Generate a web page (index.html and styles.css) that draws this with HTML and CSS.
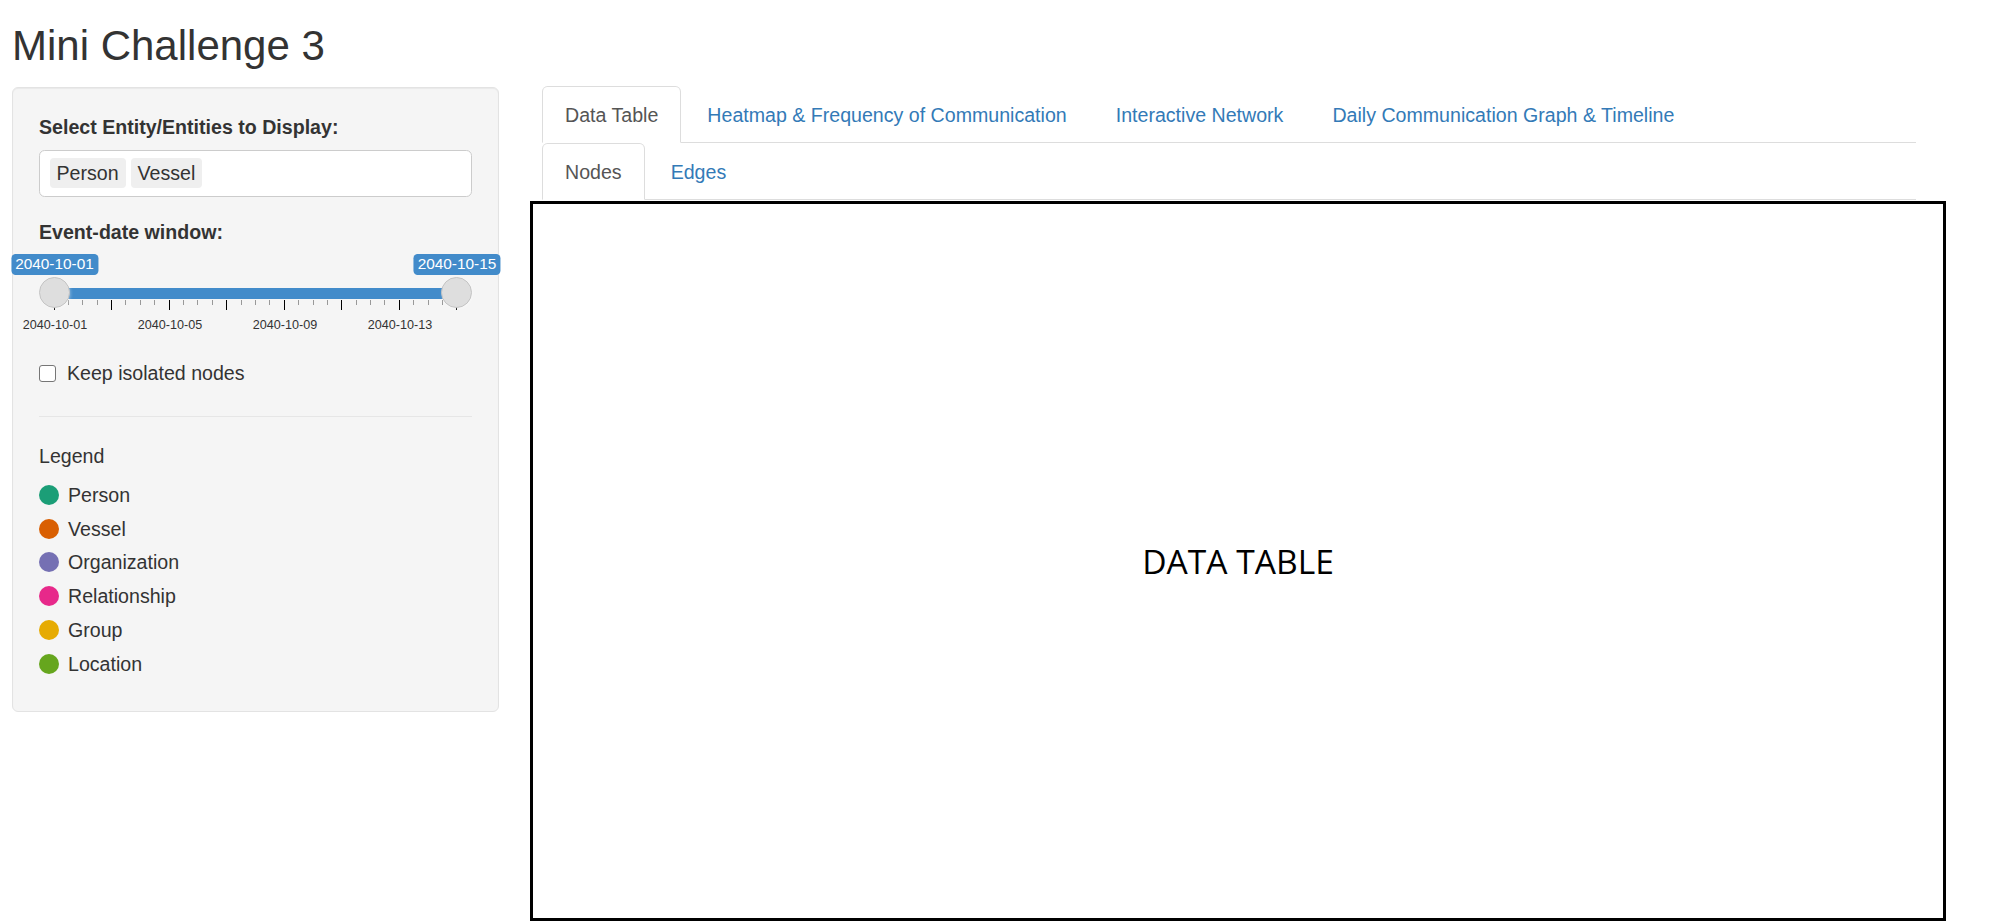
FILE: index.html
```html
<!DOCTYPE html>
<html lang="en">
<head>
<meta charset="utf-8">
<title>Mini Challenge 3</title>
<link rel="stylesheet" href="styles.css">
</head>
<body>
<div class="page">
  <h2 class="title">Mini Challenge 3</h2>
  <div class="layout">
    <aside class="sidebar">
      <div class="well">
        <div class="form-group">
          <label class="control-label">Select Entity/Entities to Display:</label>
          <div class="selectize-input">
            <span class="item">Person</span>
            <span class="item">Vessel</span>
          </div>
        </div>
        <div class="form-group slider-group">
          <label class="control-label">Event-date window:</label>
          <div class="irs">
            <span class="irs-bar"></span>
            <div class="irs-grid">
              <span class="pol"></span><span class="pol small"></span><span class="pol small"></span><span class="pol small"></span>
              <span class="pol"></span><span class="pol small"></span><span class="pol small"></span><span class="pol small"></span>
              <span class="pol"></span><span class="pol small"></span><span class="pol small"></span><span class="pol small"></span>
              <span class="pol"></span><span class="pol small"></span><span class="pol small"></span><span class="pol small"></span>
              <span class="pol"></span><span class="pol small"></span><span class="pol small"></span><span class="pol small"></span>
              <span class="pol"></span><span class="pol small"></span><span class="pol small"></span><span class="pol small"></span>
              <span class="pol"></span><span class="pol small"></span><span class="pol small"></span><span class="pol small"></span>
              <span class="pol"></span>
            </div>
            <div class="irs-grid-text">
              <span>2040-10-01</span><span>2040-10-05</span><span>2040-10-09</span><span>2040-10-13</span>
            </div>
            <span class="irs-handle from"></span>
            <span class="irs-handle to"></span>
            <span class="irs-label from">2040-10-01</span>
            <span class="irs-label to">2040-10-15</span>
          </div>
        </div>
        <div class="checkbox">
          <span class="check-box"></span>
          <span>Keep isolated nodes</span>
        </div>
        <hr class="divider">
        <div class="legend-title">Legend</div>
        <ul class="legend">
          <li><span class="dot person"></span>Person</li>
          <li><span class="dot vessel"></span>Vessel</li>
          <li><span class="dot organization"></span>Organization</li>
          <li><span class="dot relationship"></span>Relationship</li>
          <li><span class="dot group"></span>Group</li>
          <li><span class="dot location"></span>Location</li>
        </ul>
      </div>
    </aside>
    <main class="main">
      <ul class="nav-tabs">
        <li class="active"><a href="#">Data Table</a></li>
        <li><a href="#">Heatmap &amp; Frequency of Communication</a></li>
        <li><a href="#">Interactive Network</a></li>
        <li><a href="#">Daily Communication Graph &amp; Timeline</a></li>
      </ul>
      <ul class="nav-tabs">
        <li class="active"><a href="#">Nodes</a></li>
        <li><a href="#">Edges</a></li>
      </ul>
      <div class="data-box">DATA TABLE</div>
    </main>
  </div>
</div>
</body>
</html>
```
FILE: styles.css
```css
* { box-sizing: border-box; }
html, body { margin: 0; padding: 0; background: #fff; }
body {
  font-family: "Liberation Sans", Arial, Helvetica, sans-serif;
  font-size: 19.6px;
  line-height: 28px;
  color: #333;
  overflow: hidden;
}
.page { padding-left: 12px; }
.title {
  margin: 23px 0 17px;
  font-size: 42px;
  line-height: 46px;
  font-weight: 400;
  color: #333;
}
.layout { display: flex; align-items: flex-start; }
.sidebar { flex: none; width: 487px; margin-top: 1px; }
.main { flex: none; width: 1374px; margin-left: 43px; }

/* well */
.well {
  background: #f5f5f5;
  border: 1px solid #e3e3e3;
  border-radius: 6px;
  box-shadow: inset 0 1px 1px rgba(0,0,0,.05);
  padding: 24.5px 26px 30px 26px;
}
.form-group { margin-bottom: 21px; }
.form-group.slider-group { margin-bottom: 0; }
.control-label {
  display: block;
  font-weight: 700;
  margin-bottom: 9px;
}
.selectize-input {
  display: flex;
  align-items: center;
  gap: 5px;
  height: 47.4px;
  padding: 0 9.5px;
  background: #fff;
  border: 1px solid #ccc;
  border-radius: 5.6px;
}
.item {
  background: #efefef;
  border-radius: 4px;
  padding: 1.3px 7px;
  line-height: 28px;
  color: #333;
}

/* range slider */
.irs { position: relative; height: 104.2px; }
.irs-bar {
  position: absolute;
  left: 15px;
  width: 402.5px;
  top: 33.5px;
  height: 11px;
  background: #428bca;
}
.irs-handle {
  position: absolute;
  top: 22.3px;
  width: 31px;
  height: 31px;
  border-radius: 50%;
  background: #dedede;
  border: 1px solid #c4c4c4;
  box-shadow: 1px 1px 3px rgba(255,255,255,.3);
}
.irs-handle.from { left: -0.5px; }
.irs-handle.to { left: 402px; }
.irs-label {
  position: absolute;
  top: -1px;
  transform: translateX(-50%);
  background: #428bca;
  color: #fff;
  font-size: 15.4px;
  line-height: 18.5px;
  padding: 1.4px 4.2px;
  border-radius: 4.2px;
  white-space: nowrap;
}
.irs-label.from { left: 15.5px; }
.irs-label.to { left: 418px; }
.irs-grid {
  position: absolute;
  left: 14.5px;
  width: 404px;
  top: 45px;
  display: flex;
  justify-content: space-between;
  align-items: flex-start;
}
.pol { display: block; width: 1px; height: 10px; background: #000; }
.pol.small { height: 5px; background: #999; }
.irs-grid-text {
  position: absolute;
  left: -41.5px;
  top: 63px;
  display: flex;
  font-size: 12.6px;
  line-height: 15px;
  color: #333;
}
.irs-grid-text span { width: 115px; text-align: center; }

/* checkbox */
.checkbox {
  display: flex;
  align-items: center;
  gap: 11px;
  line-height: 28px;
}
.check-box {
  width: 17px;
  height: 17px;
  background: #fff;
  border: 1px solid #767676;
  border-radius: 3px;
  margin-top: 1px;
}
.divider {
  margin: 28.8px 0 25.5px;
  border: 0;
  border-top: 1px solid #e6e6e6;
  height: 0;
}
.legend-title { margin-bottom: 7.5px; }
.legend { list-style: none; margin: 0; padding: 0; }
.legend li {
  display: flex;
  align-items: center;
  gap: 9px;
  height: 33.8px;
}
.dot { width: 20px; height: 20px; border-radius: 50%; flex: none; }
.dot.person { background: #1b9e77; }
.dot.vessel { background: #d95f02; }
.dot.organization { background: #7570b3; }
.dot.relationship { background: #e7298a; }
.dot.group { background: #e6ab02; }
.dot.location { background: #66a61e; }

/* tabs */
.nav-tabs {
  display: flex;
  list-style: none;
  margin: 0;
  padding: 0;
  border-bottom: 1px solid #ddd;
}
.nav-tabs li { margin-bottom: -1px; margin-right: 3px; }
.nav-tabs a {
  display: block;
  padding: 13.5px 22px;
  line-height: 28px;
  border: 1px solid transparent;
  border-radius: 5.6px 5.6px 0 0;
  color: #337ab7;
  text-decoration: none;
  white-space: nowrap;
}
.nav-tabs .active a {
  color: #555;
  background: #fff;
  border-color: #ddd;
  border-bottom-color: transparent;
}

.data-box {
  margin: 1px 0 0 -12px;
  width: 1416px;
  height: 720px;
  border: 3px solid #000;
  background: #fff;
  display: flex;
  align-items: center;
  justify-content: center;
  font-family: "Open Sans", "Noto Sans", sans-serif;
  font-size: 33.6px;
  line-height: 1.2;
  color: #000;
}
```
